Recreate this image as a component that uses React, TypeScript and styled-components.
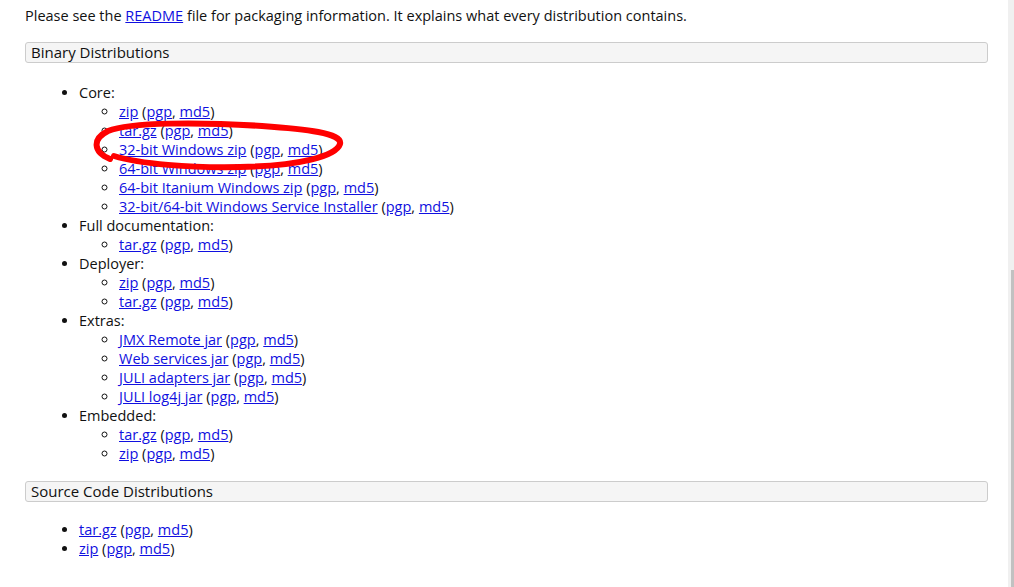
import React from "react";
import styled, { createGlobalStyle } from "styled-components";

interface Download {
  label: string;
}

interface Group {
  title: string;
  items: Download[];
}

const binaryGroups: Group[] = [
  {
    title: "Core:",
    items: [
      { label: "zip" },
      { label: "tar.gz" },
      { label: "32-bit Windows zip" },
      { label: "64-bit Windows zip" },
      { label: "64-bit Itanium Windows zip" },
      { label: "32-bit/64-bit Windows Service Installer" },
    ],
  },
  { title: "Full documentation:", items: [{ label: "tar.gz" }] },
  { title: "Deployer:", items: [{ label: "zip" }, { label: "tar.gz" }] },
  {
    title: "Extras:",
    items: [
      { label: "JMX Remote jar" },
      { label: "Web services jar" },
      { label: "JULI adapters jar" },
      { label: "JULI log4j jar" },
    ],
  },
  { title: "Embedded:", items: [{ label: "tar.gz" }, { label: "zip" }] },
];

const sourceItems: Download[] = [{ label: "tar.gz" }, { label: "zip" }];

const GlobalStyle = createGlobalStyle`
  html, body {
    margin: 0;
    padding: 0;
    background: #ffffff;
  }
  body {
    font-family: "Open Sans", "Liberation Sans", sans-serif;
    font-size: 14.5px;
    line-height: 19px;
    color: #111111;
  }
`;

const Page = styled.div`
  position: relative;
  display: flex;
  height: 587px;
  overflow: hidden;
`;

const Content = styled.main`
  flex: 1;
  padding: 6px 20px 0 25px;
`;

const Intro = styled.p`
  margin: 0;
`;

const SectionHeader = styled.h3<{ $first?: boolean }>`
  margin: ${(p) => (p.$first ? "17px" : "0")} 0 0;
  padding: 0 5px;
  font-size: 15px;
  font-weight: normal;
  line-height: 19px;
  background: #f5f5f5;
  border: 1px solid #cccccc;
  border-radius: 3px;
`;

const List = styled.ul<{ $nested?: boolean; $spacing?: string }>`
  margin: ${(p) => (p.$nested ? "0" : p.$spacing || "20px 0")};
  padding-left: ${(p) => (p.$nested ? "40px" : "54px")};
  list-style-type: ${(p) => (p.$nested ? "circle" : "disc")};
`;

const Item = styled.li`
  line-height: 19px;
`;

const Link = styled.a`
  color: #1010e0;
  text-decoration: underline;
`;

const ScrollTrack = styled.div`
  width: 6px;
  background: #f0f0f0;
  display: flex;
  flex-direction: column;
  align-items: flex-end;
  padding-top: 270px;
`;

const ScrollThumb = styled.div`
  width: 3px;
  flex: 1;
  background: #c1c1c1;
`;

const Annotation = styled.svg`
  position: absolute;
  left: 0;
  top: 0;
  pointer-events: none;
`;

const DownloadLine: React.FC<Download> = ({ label }) => (
  <Item>
    <Link href="#">{label}</Link> (<Link href="#">pgp</Link>,{" "}
    <Link href="#">md5</Link>)
  </Item>
);

const App: React.FC = () => {
  return (
    <>
      <GlobalStyle />
      <Page>
        <Content>
          <Intro>
            Please see the <Link href="#">README</Link> file for packaging
            information. It explains what every distribution contains.
          </Intro>
          <SectionHeader $first>Binary Distributions</SectionHeader>
          <List $spacing="20px 0 18px">
            {binaryGroups.map((group) => (
              <Item key={group.title}>
                {group.title}
                <List $nested>
                  {group.items.map((d, i) => (
                    <DownloadLine key={i} label={d.label} />
                  ))}
                </List>
              </Item>
            ))}
          </List>
          <SectionHeader>Source Code Distributions</SectionHeader>
          <List $spacing="18px 0">
            {sourceItems.map((d, i) => (
              <DownloadLine key={i} label={d.label} />
            ))}
          </List>
        </Content>
        <ScrollTrack>
          <ScrollThumb />
        </ScrollTrack>
        <Annotation width="1014" height="587" viewBox="0 0 1014 587">
          <path
            d="M 110 159 C 93 152, 92 139, 108 131 C 130 122, 200 122, 262 126 C 305 129, 343 133, 340 144 C 336 156, 300 166, 240 167 C 190 168, 140 164, 114 156"
            fill="none"
            stroke="#ff0000"
            strokeWidth="6"
            strokeLinecap="round"
          />
        </Annotation>
      </Page>
    </>
  );
};

export default App;
